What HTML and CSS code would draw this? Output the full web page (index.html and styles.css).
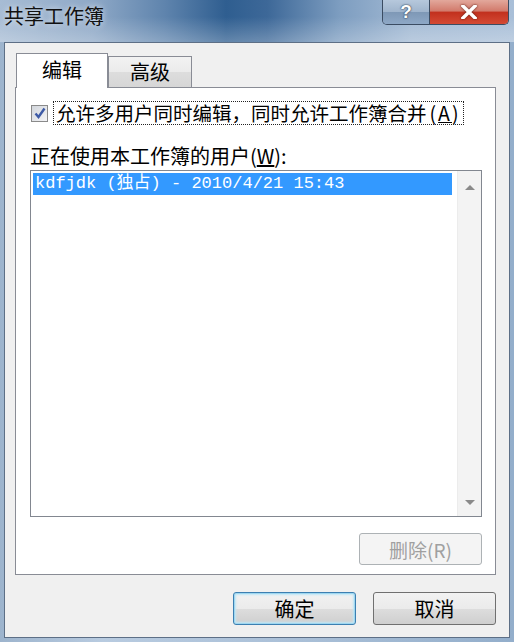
FILE: index.html
```html
<!DOCTYPE html>
<html lang="zh">
<head>
    <meta charset="UTF-8">
    <title>共享工作簿</title>
    <link rel="stylesheet" href="styles.css">
</head>
<body>
    <div class="window">
        <div class="titlebar">
            <div class="title">共享工作簿</div>
            <div class="caption-buttons">
                <div class="cap-btn help-btn">?</div>
                <div class="cap-btn close-btn">
                    <svg width="16" height="14" viewBox="0 0 16 14">
                        <path d="M2 1 L14 13 M14 1 L2 13" stroke="#fff" stroke-width="3.4" stroke-linecap="square" fill="none"/>
                    </svg>
                </div>
            </div>
        </div>

        <div class="client">
            <div class="tabs">
                <div class="tab active">编辑</div>
                <div class="tab">高级</div>
            </div>

            <div class="tab-page">
                <div class="check-row">
                    <span class="checkbox">
                        <svg width="14" height="14" viewBox="0 0 14 14">
                            <path d="M2.5 7.5 L5.5 11 L11.5 2.5" stroke="#3d5aa6" stroke-width="2.4" fill="none"/>
                        </svg>
                    </span>
                    <span class="check-label">允许多用户同时编辑，同时允许工作簿合并<span class="hotkey">(<u>A</u>)</span></span>
                </div>

                <div class="users-label">正在使用本工作簿的用户(<u>W</u>):</div>

                <div class="listbox">
                    <div class="list-items">
                        <div class="list-item selected">kdfjdk (独占) - 2010/4/21 15:43</div>
                    </div>
                    <div class="scrollbar">
                        <span class="arrow up"></span>
                        <span class="arrow down"></span>
                    </div>
                </div>

                <div class="delete-row">
                    <button class="btn disabled">删除(R)</button>
                </div>
            </div>

            <div class="footer">
                <button class="btn default">确定</button>
                <button class="btn">取消</button>
            </div>
        </div>
    </div>
</body>
</html>
```

FILE: styles.css
```css
body {
    margin: 0;
    padding: 0;
    font-family: "Noto Sans CJK SC", "Liberation Sans", sans-serif;
    color: #000;
}

.window {
    width: 514px;
    height: 642px;
    display: flex;
    flex-direction: column;
    background: linear-gradient(to right, #9db4cd 0%, #b8cbe0 20%, #a9bfd7 60%, #93aecb 100%);
}

.titlebar {
    height: 42px;
    display: flex;
    justify-content: space-between;
    align-items: flex-start;
    background:
        linear-gradient(to bottom, rgba(255, 255, 255, 0) 40%, rgba(255, 255, 255, 0.25) 100%),
        linear-gradient(to right, #a7bcd4 0%, #8fa9c7 18%, #5f84ad 32%, #2f5e90 44%, #3d6898 52%, #7d9dc0 66%, #a3bad4 80%, #a9bfd8 100%);
}

.title {
    font-size: 20px;
    line-height: 22px;
    padding: 5px 0 0 4px;
    color: #111;
    text-shadow: 0 0 6px rgba(255, 255, 255, 0.8);
}

.caption-buttons {
    display: flex;
    margin-right: 5px;
    border: 1px solid #3b4c62;
    border-top: none;
    border-radius: 0 0 5px 5px;
    overflow: hidden;
}

.cap-btn {
    height: 24px;
    display: flex;
    align-items: center;
    justify-content: center;
}

.help-btn {
    width: 46px;
    border-right: 1px solid #3b4c62;
    background: linear-gradient(to bottom, #b6c8dc 0%, #9fb4cc 50%, #7e98b6 51%, #8ea8c6 100%);
    color: #fff;
    font-family: "Liberation Sans", sans-serif;
    font-weight: bold;
    font-size: 19px;
    text-shadow: 0 0 2px #2a3a50, 0 0 1px #2a3a50;
}

.close-btn {
    width: 78px;
    background: linear-gradient(to bottom, #e2a89c 0%, #d27b6c 45%, #c2311e 52%, #d44a34 100%);
}

.close-btn svg {
    filter: drop-shadow(0 0 1px #5a1a10);
}

.client {
    flex: 1;
    margin: 0 4px 4px 4px;
    background: #f0f0f0;
    border: 1px solid #5d6f86;
    padding: 10px 13px 12px 10px;
    display: flex;
    flex-direction: column;
}

.tabs {
    display: flex;
    align-items: flex-end;
    height: 34px;
    padding-left: 1px;
}

.tab {
    height: 30px;
    border: 1px solid #898c95;
    border-bottom: none;
    background: linear-gradient(to bottom, #f2f2f2 0%, #ebebeb 50%, #dddddd 51%, #d6d6d6 100%);
    font-size: 20px;
    line-height: 30px;
    text-align: center;
    width: 82px;
}

.tab.active {
    position: relative;
    z-index: 1;
    width: 90px;
    height: 34px;
    margin-bottom: -1px;
    background: #fff;
    line-height: 32px;
}

.tab-page {
    height: 488px;
    box-sizing: border-box;
    border: 1px solid #898c95;
    background: #fff;
    padding: 13px 13px 9px 14px;
    display: flex;
    flex-direction: column;
}

.check-row {
    display: flex;
    align-items: center;
    height: 24px;
}

.checkbox {
    width: 15px;
    height: 15px;
    margin-left: 1px;
    margin-right: 6px;
    border: 1px solid #8a8a8a;
    background: linear-gradient(135deg, #d2d6dc 0%, #f4f4f6 100%);
    display: flex;
    align-items: center;
    justify-content: center;
}

.check-label {
    font-size: 19.5px;
    line-height: 22px;
    padding: 0 2px;
    outline: 1px dotted #222;
    outline-offset: 0;
}

.hotkey {
    padding-left: 3px;
    letter-spacing: 2px;
}

.users-label {
    font-size: 20px;
    line-height: 24px;
    margin: 19px 0 2px 0;
}

.listbox {
    height: 347px;
    box-sizing: border-box;
    border: 1px solid #828790;
    display: flex;
}

.list-items {
    flex: 1;
    padding: 2px 5px 2px 2px;
}

.list-item {
    height: 22px;
    font-family: "Liberation Mono", "Noto Sans CJK SC", monospace;
    font-size: 17px;
    line-height: 22px;
    padding-left: 2px;
    white-space: nowrap;
}

.list-item.selected {
    background: #3399ff;
    color: #fff;
}

.scrollbar {
    width: 23px;
    background: #f3f3f3;
    border-left: 1px solid #ececec;
    display: flex;
    flex-direction: column;
    justify-content: space-between;
    align-items: center;
    padding: 14px 0 11px 0;
}

.arrow {
    width: 0;
    height: 0;
    border-left: 5px solid transparent;
    border-right: 5px solid transparent;
}

.arrow.up {
    border-bottom: 5px solid #8a8a8a;
}

.arrow.down {
    border-top: 5px solid #8a8a8a;
}

.delete-row {
    display: flex;
    justify-content: flex-end;
    margin-top: 16px;
}

.btn {
    width: 123px;
    height: 33px;
    border: 1px solid #707070;
    border-radius: 3px;
    background: linear-gradient(to bottom, #f2f2f2 0%, #ebebeb 50%, #dddddd 51%, #cfcfcf 100%);
    font-family: "Noto Sans CJK SC", sans-serif;
    font-size: 20px;
    color: #000;
    padding: 0;
}

.btn.disabled {
    height: 32px;
    border-color: #adb2b5;
    background: #f4f4f4;
    color: #a0a0a0;
    font-size: 19px;
}

.btn.default {
    border-color: #3c7fb1;
    box-shadow: inset 0 0 0 1px #9ed7f0, inset 0 0 2px 2px #bfe6f6;
}

.footer {
    display: flex;
    justify-content: flex-end;
    gap: 17px;
    margin-top: 17px;
}
```
